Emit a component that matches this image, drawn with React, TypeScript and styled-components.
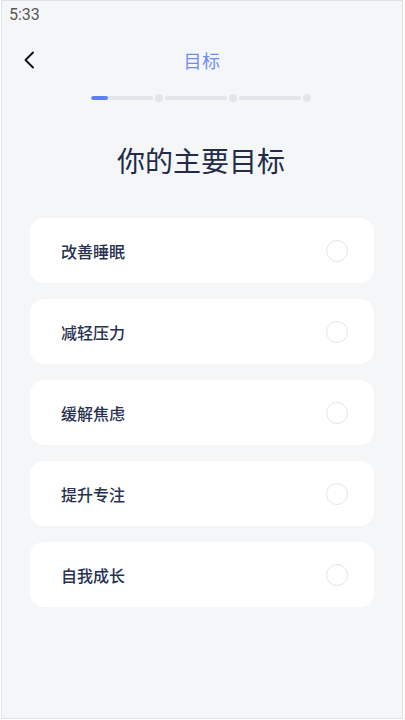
import React from "react";
import styled, { createGlobalStyle } from "styled-components";

const GlobalStyle = createGlobalStyle`
  html, body { margin: 0; padding: 0; background: #ffffff; }
  body { font-family: "Noto Sans CJK SC", "Noto Sans", sans-serif; }
  * { box-sizing: border-box; }
`;

const Frame = styled.div`
  width: 405px;
  height: 720px;
  padding: 0 2px 1px 1px;
  background: #ffffff;
`;

const Screen = styled.div`
  width: 100%;
  height: 100%;
  background: #f5f6f8;
  border: 1px solid #e1e2e5;
  display: flex;
  flex-direction: column;
  overflow: hidden;
`;

const StatusBar = styled.div`
  height: 27px;
  display: flex;
  align-items: center;
  padding-left: 7px;
  font-family: Roboto, "Liberation Sans", sans-serif;
  font-size: 16px;
  color: #585858;
`;

const Header = styled.div`
  position: relative;
  height: 48px;
  margin-top: 8px;
  display: flex;
  align-items: center;
  justify-content: center;
`;

const BackButton = styled.button`
  position: absolute;
  left: 15px;
  top: 12px;
  width: 24px;
  height: 24px;
  padding: 0;
  border: none;
  background: transparent;
  display: flex;
  align-items: center;
  justify-content: center;
`;

const HeaderTitle = styled.div`
  font-size: 18px;
  color: #6f8ef5;
  letter-spacing: 0.5px;
`;

const Progress = styled.div`
  margin-top: 9px;
  height: 9px;
  display: flex;
  align-items: center;
  justify-content: center;
  gap: 2px;
  padding-right: 2px;
`;

const Segment = styled.div`
  flex: 0 0 62px;
  height: 4px;
  border-radius: 2px;
  background: #e4e5ea;
  overflow: hidden;
`;

const Fill = styled.div`
  height: 100%;
  border-radius: 2px;
  background: #5b82f2;
`;

const Dot = styled.div`
  flex: 0 0 8px;
  width: 8px;
  height: 8px;
  border-radius: 50%;
  background: #e4e5ea;
`;

const Title = styled.h1`
  margin: 38px 0 0;
  height: 40px;
  line-height: 40px;
  text-align: center;
  font-size: 28px;
  font-weight: 400;
  color: #232b48;
  padding-right: 2px;
`;

const List = styled.div`
  margin-top: 38px;
  padding: 0 28px 0 28px;
  display: flex;
  flex-direction: column;
  gap: 16px;
`;

const Card = styled.div`
  height: 65px;
  border-radius: 14px;
  background: #ffffff;
  display: flex;
  align-items: center;
  justify-content: space-between;
  padding: 0 26px 0 31px;
`;

const Label = styled.span`
  font-size: 16px;
  font-weight: 500;
  color: #283150;
`;

const Radio = styled.span`
  flex: 0 0 22px;
  width: 22px;
  height: 22px;
  border-radius: 50%;
  border: 1.5px solid #e3e5e8;
`;

const goals = ["改善睡眠", "减轻压力", "缓解焦虑", "提升专注", "自我成长"];

export default function App() {
  return (
    <>
      <GlobalStyle />
      <Frame>
        <Screen>
          <StatusBar>5:33</StatusBar>
          <Header>
            <BackButton aria-label="返回">
              <svg width="12" height="18" viewBox="0 0 12 18" fill="none">
                <path d="M10 1.5 L2.5 9 L10 16.5" stroke="#111" strokeWidth="1.9" strokeLinecap="round" strokeLinejoin="round" />
              </svg>
            </BackButton>
            <HeaderTitle>目标</HeaderTitle>
          </Header>
          <Progress>
            <Segment>
              <Fill style={{ width: "28%" }} />
            </Segment>
            <Dot />
            <Segment />
            <Dot />
            <Segment />
            <Dot />
          </Progress>
          <Title>你的主要目标</Title>
          <List>
            {goals.map((g) => (
              <Card key={g}>
                <Label>{g}</Label>
                <Radio />
              </Card>
            ))}
          </List>
        </Screen>
      </Frame>
    </>
  );
}
